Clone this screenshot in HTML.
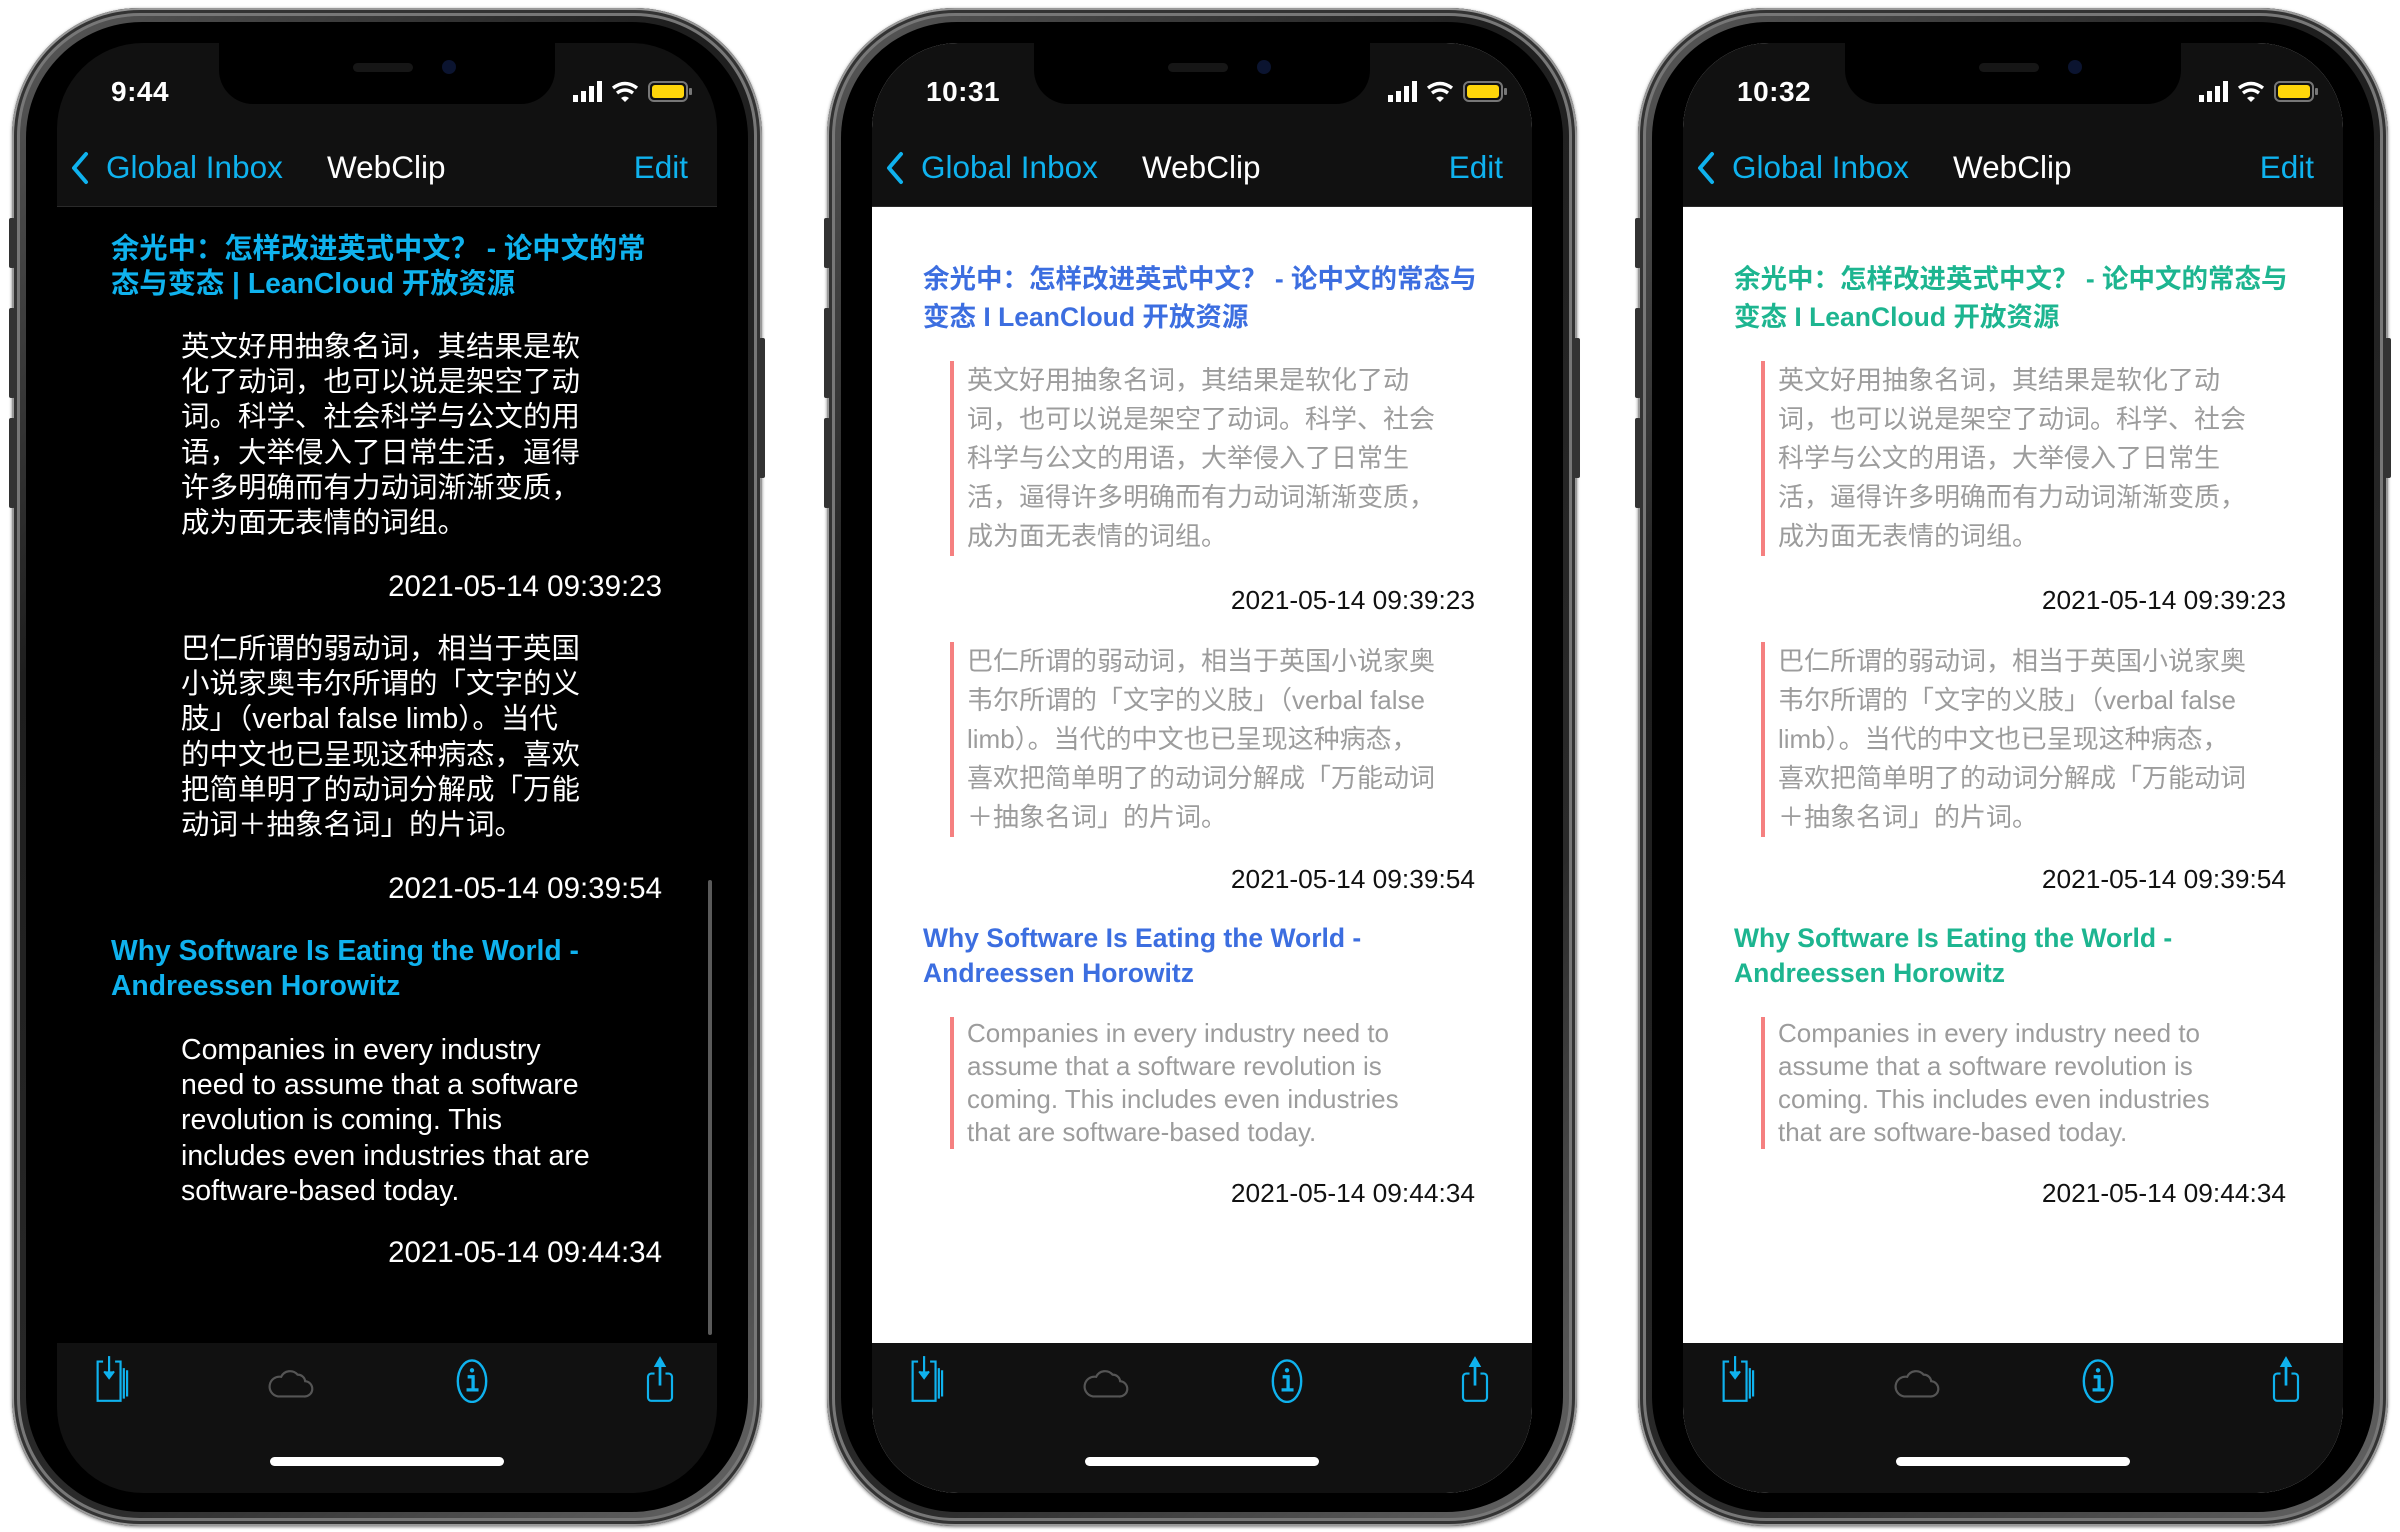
<!DOCTYPE html>
<html><head><meta charset="utf-8"><style>
*{margin:0;padding:0;box-sizing:border-box}
body{width:2400px;height:1532px;background:#fff;position:relative;overflow:hidden;font-family:"Liberation Sans","Noto Sans CJK SC",sans-serif}
.phone{position:absolute;top:8px;width:750px;height:1518px;border-radius:128px;background:linear-gradient(135deg,#5a5a5a,#1e1e1e 30%,#2a2a2a 70%,#666);box-shadow:inset 0 0 0 2px #999,inset 0 0 0 5px #333,inset 0 0 0 8px #777,0 1px 3px rgba(0,0,0,.5)}
.bezel{position:absolute;left:14px;top:14px;right:14px;bottom:14px;border-radius:116px;background:#000}
.btn{position:absolute;background:#333;width:6px;border-radius:2px}
.screen{position:absolute;left:45px;top:35px;width:660px;height:1450px;border-radius:86px;overflow:hidden;background:#000}
.light .screen{background:#fff}
.top{position:absolute;left:0;top:0;width:660px;height:164px;background:#111;border-bottom:1px solid #2a2a2a}
.notch{position:absolute;left:162px;top:-2px;width:336px;height:63px;background:#000;border-radius:0 0 34px 34px}
.spk{position:absolute;left:134px;top:22px;width:60px;height:9px;border-radius:5px;background:#161616}
.cam{position:absolute;left:223px;top:19px;width:14px;height:14px;border-radius:7px;background:#0b1430}
.time{position:absolute;left:54px;top:33px;color:#fff;font-size:28px;font-weight:bold;letter-spacing:.5px}
.nav{position:absolute;top:105px;font-size:31.5px;line-height:38px;white-space:nowrap}
.cy{color:#0fb2ee}
.bar{position:absolute;left:0;top:1300px;width:660px;height:150px;background:#111}
.home{position:absolute;left:213px;top:1414px;width:234px;height:9px;border-radius:5px;background:#fff}
.ico{position:absolute;top:1312px;width:48px;height:48px}
.b{position:absolute;white-space:nowrap}
.d .t{color:#0fb2ee;font-size:28.3px;line-height:35px;font-weight:bold}
.d .q{color:#fff;font-size:28.5px;line-height:35.2px}
.d .ts{color:#fff;font-size:29.5px;right:55px;line-height:35px}
.light .t{font-size:26.5px;line-height:38px;font-weight:bold}
.light .q{color:#9c9c9c;font-size:26px;line-height:39px;padding-left:13px;border-left:4px solid #f58080;left:78px}
.light .ts{color:#111;font-size:26.3px;right:57px;line-height:35px}
.blue .t{color:#3c6ee0}
.green .t{color:#1db590}
</style></head><body>

<div class="phone d" style="left:12px">
<div class="btn" style="left:-3px;top:210px;height:50px"></div><div class="btn" style="left:-3px;top:300px;height:90px"></div><div class="btn" style="left:-3px;top:410px;height:90px"></div><div class="btn" style="right:-3px;top:330px;height:140px"></div>
<div class="bezel"></div>
<div class="screen">
<div class="top"></div>
<div class="notch"><div class="spk"></div><div class="cam"></div></div>
<div class="time">9:44</div>
<svg style="position:absolute;left:514px;top:36px" width="124" height="26" viewBox="0 0 124 26"><rect x="2" y="16" width="5" height="7" fill="#fff"/><rect x="10" y="12" width="5" height="11" fill="#fff"/><rect x="18" y="7" width="5" height="16" fill="#fff"/><rect x="26" y="2" width="5" height="21" fill="#fff"/><path d="M42 9 Q54 0 66 9" stroke="#fff" stroke-width="3.5" fill="none"/><path d="M46 14 Q54 8 62 14" stroke="#fff" stroke-width="3.5" fill="none"/><path d="M50 19 L54 23 L58 19 Q54 16 50 19Z" fill="#fff"/><rect x="78" y="3" width="38" height="19" rx="5" fill="none" stroke="#777" stroke-width="2"/><rect x="81" y="6" width="32" height="13" rx="3" fill="#ffd60a"/><rect x="118" y="9" width="3" height="7" rx="1" fill="#777"/></svg>
<svg style="position:absolute;left:12px;top:108px" width="22" height="34" viewBox="0 0 22 34"><path d="M17 3 L5 17 L17 31" stroke="#0fb2ee" stroke-width="4" fill="none" stroke-linecap="round" stroke-linejoin="round"/></svg>
<div class="nav cy" style="left:49px">Global Inbox</div>
<div class="nav" style="left:270px;color:#fff">WebClip</div>
<div class="nav cy" style="right:29px">Edit</div>

<div class="b t" style="left:54px;top:188px">余光中：怎样改进英式中文？ - 论中文的常<br>态与变态 | LeanCloud 开放资源</div>
<div class="b q" style="left:124px;top:287px">英文好用抽象名词，其结果是软<br>化了动词，也可以说是架空了动<br>词。科学、社会科学与公文的用<br>语，大举侵入了日常生活，逼得<br>许多明确而有力动词渐渐变质，<br>成为面无表情的词组。</div>
<div class="b ts" style="top:526px">2021-05-14 09:39:23</div>
<div class="b q" style="left:124px;top:589px">巴仁所谓的弱动词，相当于英国<br>小说家奥韦尔所谓的「文字的义<br>肢」（verbal false limb）。当代<br>的中文也已呈现这种病态，喜欢<br>把简单明了的动词分解成「万能<br>动词＋抽象名词」的片词。</div>
<div class="b ts" style="top:828px">2021-05-14 09:39:54</div>
<div class="b t" style="left:54px;top:890px">Why Software Is Eating the World -<br>Andreessen Horowitz</div>
<div class="b q" style="left:124px;top:990px">Companies in every industry<br>need to assume that a software<br>revolution is coming. This<br>includes even industries that are<br>software-based today.</div>
<div class="b ts" style="top:1192px">2021-05-14 09:44:34</div>
<div style="position:absolute;left:651px;top:837px;width:4px;height:455px;border-radius:2px;background:#5a5a5a"></div>

<div class="bar"></div>
<svg class="ico" style="left:33px" viewBox="0 0 44 44" fill="none" stroke="#0fb2ee" stroke-width="2"><path d="M12 6 H7 V42 H28 V6 H23"/><path d="M17.5 1 V20"/><path d="M13 15 L17.5 21 L22 15" fill="#0fb2ee"/><path d="M31 12 V40 M34 14 V38"/></svg>
<svg class="ico" style="left:210px" viewBox="0 0 44 44" fill="none" stroke="#555" stroke-width="2"><path d="M10 38 H34 A7 7 0 0 0 35 24 A7 7 0 0 0 28 18 A9 9 0 0 0 13 20 A9 9 0 0 0 10 38Z"/></svg>
<svg class="ico" style="left:391px" viewBox="0 0 44 44" fill="none" stroke="#0fb2ee" stroke-width="2.2"><ellipse cx="22" cy="24" rx="13" ry="19"/><circle cx="22" cy="14" r="2" fill="#0fb2ee" stroke="none"/><path d="M18 20 H23 V32 M17 32 H28" stroke-width="3"/></svg>
<svg class="ico" style="left:579px" viewBox="0 0 44 44" fill="none" stroke="#0fb2ee" stroke-width="2"><path d="M17 17 H14 A3 3 0 0 0 11 20 V39 A3 3 0 0 0 14 42 H30 A3 3 0 0 0 33 39 V20 A3 3 0 0 0 30 17 H27"/><path d="M22 4 V28" stroke-width="2.5"/><path d="M18 10 L22 3 L26 10Z" fill="#0fb2ee"/></svg>
<div class="home"></div>
</div></div>

<div class="phone light blue" style="left:827px">
<div class="btn" style="left:-3px;top:210px;height:50px"></div><div class="btn" style="left:-3px;top:300px;height:90px"></div><div class="btn" style="left:-3px;top:410px;height:90px"></div><div class="btn" style="right:-3px;top:330px;height:140px"></div>
<div class="bezel"></div>
<div class="screen">
<div class="top"></div>
<div class="notch"><div class="spk"></div><div class="cam"></div></div>
<div class="time">10:31</div>
<svg style="position:absolute;left:514px;top:36px" width="124" height="26" viewBox="0 0 124 26"><rect x="2" y="16" width="5" height="7" fill="#fff"/><rect x="10" y="12" width="5" height="11" fill="#fff"/><rect x="18" y="7" width="5" height="16" fill="#fff"/><rect x="26" y="2" width="5" height="21" fill="#fff"/><path d="M42 9 Q54 0 66 9" stroke="#fff" stroke-width="3.5" fill="none"/><path d="M46 14 Q54 8 62 14" stroke="#fff" stroke-width="3.5" fill="none"/><path d="M50 19 L54 23 L58 19 Q54 16 50 19Z" fill="#fff"/><rect x="78" y="3" width="38" height="19" rx="5" fill="none" stroke="#777" stroke-width="2"/><rect x="81" y="6" width="32" height="13" rx="3" fill="#ffd60a"/><rect x="118" y="9" width="3" height="7" rx="1" fill="#777"/></svg>
<svg style="position:absolute;left:12px;top:108px" width="22" height="34" viewBox="0 0 22 34"><path d="M17 3 L5 17 L17 31" stroke="#0fb2ee" stroke-width="4" fill="none" stroke-linecap="round" stroke-linejoin="round"/></svg>
<div class="nav cy" style="left:49px">Global Inbox</div>
<div class="nav" style="left:270px;color:#fff">WebClip</div>
<div class="nav cy" style="right:29px">Edit</div>

<div class="b t" style="left:51px;top:217px">余光中：怎样改进英式中文？ - 论中文的常态与<br>变态 I LeanCloud 开放资源</div>
<div class="b q" style="top:318px">英文好用抽象名词，其结果是软化了动<br>词，也可以说是架空了动词。科学、社会<br>科学与公文的用语，大举侵入了日常生<br>活，逼得许多明确而有力动词渐渐变质，<br>成为面无表情的词组。</div>
<div class="b ts" style="top:540px">2021-05-14 09:39:23</div>
<div class="b q" style="top:599px">巴仁所谓的弱动词，相当于英国小说家奥<br>韦尔所谓的「文字的义肢」（verbal false<br>limb）。当代的中文也已呈现这种病态，<br>喜欢把简单明了的动词分解成「万能动词<br>＋抽象名词」的片词。</div>
<div class="b ts" style="top:819px">2021-05-14 09:39:54</div>
<div class="b t" style="left:51px;top:878px;line-height:35px">Why Software Is Eating the World -<br>Andreessen Horowitz</div>
<div class="b q" style="top:974px;line-height:33px">Companies in every industry need to<br>assume that a software revolution is<br>coming. This includes even industries<br>that are software-based today.</div>
<div class="b ts" style="top:1133px">2021-05-14 09:44:34</div>

<div class="bar"></div>
<svg class="ico" style="left:33px" viewBox="0 0 44 44" fill="none" stroke="#0fb2ee" stroke-width="2"><path d="M12 6 H7 V42 H28 V6 H23"/><path d="M17.5 1 V20"/><path d="M13 15 L17.5 21 L22 15" fill="#0fb2ee"/><path d="M31 12 V40 M34 14 V38"/></svg>
<svg class="ico" style="left:210px" viewBox="0 0 44 44" fill="none" stroke="#555" stroke-width="2"><path d="M10 38 H34 A7 7 0 0 0 35 24 A7 7 0 0 0 28 18 A9 9 0 0 0 13 20 A9 9 0 0 0 10 38Z"/></svg>
<svg class="ico" style="left:391px" viewBox="0 0 44 44" fill="none" stroke="#0fb2ee" stroke-width="2.2"><ellipse cx="22" cy="24" rx="13" ry="19"/><circle cx="22" cy="14" r="2" fill="#0fb2ee" stroke="none"/><path d="M18 20 H23 V32 M17 32 H28" stroke-width="3"/></svg>
<svg class="ico" style="left:579px" viewBox="0 0 44 44" fill="none" stroke="#0fb2ee" stroke-width="2"><path d="M17 17 H14 A3 3 0 0 0 11 20 V39 A3 3 0 0 0 14 42 H30 A3 3 0 0 0 33 39 V20 A3 3 0 0 0 30 17 H27"/><path d="M22 4 V28" stroke-width="2.5"/><path d="M18 10 L22 3 L26 10Z" fill="#0fb2ee"/></svg>
<div class="home"></div>
</div></div>

<div class="phone light green" style="left:1638px">
<div class="btn" style="left:-3px;top:210px;height:50px"></div><div class="btn" style="left:-3px;top:300px;height:90px"></div><div class="btn" style="left:-3px;top:410px;height:90px"></div><div class="btn" style="right:-3px;top:330px;height:140px"></div>
<div class="bezel"></div>
<div class="screen">
<div class="top"></div>
<div class="notch"><div class="spk"></div><div class="cam"></div></div>
<div class="time">10:32</div>
<svg style="position:absolute;left:514px;top:36px" width="124" height="26" viewBox="0 0 124 26"><rect x="2" y="16" width="5" height="7" fill="#fff"/><rect x="10" y="12" width="5" height="11" fill="#fff"/><rect x="18" y="7" width="5" height="16" fill="#fff"/><rect x="26" y="2" width="5" height="21" fill="#fff"/><path d="M42 9 Q54 0 66 9" stroke="#fff" stroke-width="3.5" fill="none"/><path d="M46 14 Q54 8 62 14" stroke="#fff" stroke-width="3.5" fill="none"/><path d="M50 19 L54 23 L58 19 Q54 16 50 19Z" fill="#fff"/><rect x="78" y="3" width="38" height="19" rx="5" fill="none" stroke="#777" stroke-width="2"/><rect x="81" y="6" width="32" height="13" rx="3" fill="#ffd60a"/><rect x="118" y="9" width="3" height="7" rx="1" fill="#777"/></svg>
<svg style="position:absolute;left:12px;top:108px" width="22" height="34" viewBox="0 0 22 34"><path d="M17 3 L5 17 L17 31" stroke="#0fb2ee" stroke-width="4" fill="none" stroke-linecap="round" stroke-linejoin="round"/></svg>
<div class="nav cy" style="left:49px">Global Inbox</div>
<div class="nav" style="left:270px;color:#fff">WebClip</div>
<div class="nav cy" style="right:29px">Edit</div>

<div class="b t" style="left:51px;top:217px">余光中：怎样改进英式中文？ - 论中文的常态与<br>变态 I LeanCloud 开放资源</div>
<div class="b q" style="top:318px">英文好用抽象名词，其结果是软化了动<br>词，也可以说是架空了动词。科学、社会<br>科学与公文的用语，大举侵入了日常生<br>活，逼得许多明确而有力动词渐渐变质，<br>成为面无表情的词组。</div>
<div class="b ts" style="top:540px">2021-05-14 09:39:23</div>
<div class="b q" style="top:599px">巴仁所谓的弱动词，相当于英国小说家奥<br>韦尔所谓的「文字的义肢」（verbal false<br>limb）。当代的中文也已呈现这种病态，<br>喜欢把简单明了的动词分解成「万能动词<br>＋抽象名词」的片词。</div>
<div class="b ts" style="top:819px">2021-05-14 09:39:54</div>
<div class="b t" style="left:51px;top:878px;line-height:35px">Why Software Is Eating the World -<br>Andreessen Horowitz</div>
<div class="b q" style="top:974px;line-height:33px">Companies in every industry need to<br>assume that a software revolution is<br>coming. This includes even industries<br>that are software-based today.</div>
<div class="b ts" style="top:1133px">2021-05-14 09:44:34</div>

<div class="bar"></div>
<svg class="ico" style="left:33px" viewBox="0 0 44 44" fill="none" stroke="#0fb2ee" stroke-width="2"><path d="M12 6 H7 V42 H28 V6 H23"/><path d="M17.5 1 V20"/><path d="M13 15 L17.5 21 L22 15" fill="#0fb2ee"/><path d="M31 12 V40 M34 14 V38"/></svg>
<svg class="ico" style="left:210px" viewBox="0 0 44 44" fill="none" stroke="#555" stroke-width="2"><path d="M10 38 H34 A7 7 0 0 0 35 24 A7 7 0 0 0 28 18 A9 9 0 0 0 13 20 A9 9 0 0 0 10 38Z"/></svg>
<svg class="ico" style="left:391px" viewBox="0 0 44 44" fill="none" stroke="#0fb2ee" stroke-width="2.2"><ellipse cx="22" cy="24" rx="13" ry="19"/><circle cx="22" cy="14" r="2" fill="#0fb2ee" stroke="none"/><path d="M18 20 H23 V32 M17 32 H28" stroke-width="3"/></svg>
<svg class="ico" style="left:579px" viewBox="0 0 44 44" fill="none" stroke="#0fb2ee" stroke-width="2"><path d="M17 17 H14 A3 3 0 0 0 11 20 V39 A3 3 0 0 0 14 42 H30 A3 3 0 0 0 33 39 V20 A3 3 0 0 0 30 17 H27"/><path d="M22 4 V28" stroke-width="2.5"/><path d="M18 10 L22 3 L26 10Z" fill="#0fb2ee"/></svg>
<div class="home"></div>
</div></div>

</body></html>
